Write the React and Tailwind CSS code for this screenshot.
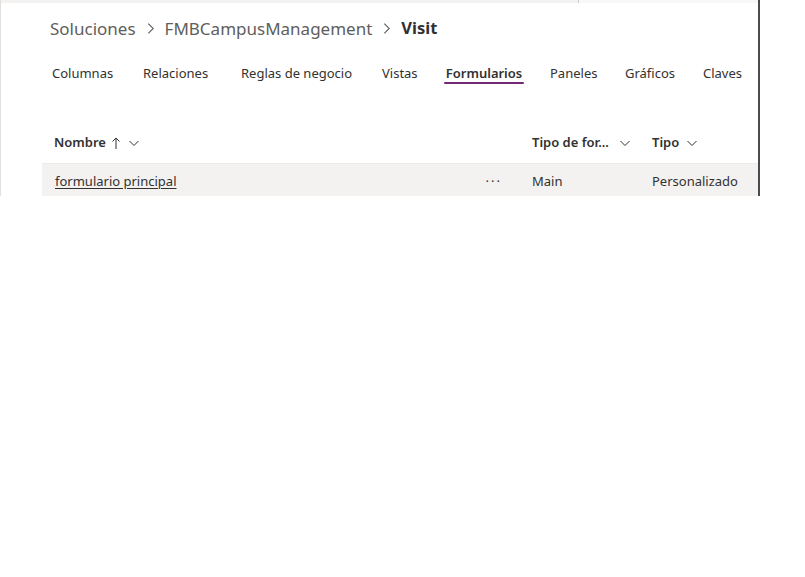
import React from 'react';

const font = { fontFamily: '"Segoe UI", "Noto Sans", "Open Sans", sans-serif' };

const Chevron = ({ className = '' }) => (
  <svg viewBox="0 0 12 12" className={className} fill="none" stroke="currentColor" strokeWidth="1">
    <path d="M1.5 4 L6 8.5 L10.5 4" />
  </svg>
);

const UpArrow = () => (
  <svg viewBox="0 0 10 14" className="w-[10px] h-[14px]" fill="none" stroke="currentColor" strokeWidth="1">
    <path d="M5 13 V2 M1.5 5.5 L5 2 L8.5 5.5" />
  </svg>
);

const tabs = [
  ['Columnas', 'w-[91px]'],
  ['Relaciones', 'w-[98px]'],
  ['Reglas de negocio', 'w-[141px]'],
  ['Vistas', 'w-[62px]'],
  ['Formularios', 'w-[106px]'],
  ['Paneles', 'w-[75px]'],
  ['Gráficos', 'w-[78px]'],
  ['Claves', 'w-[50px]'],
];

export default function App() {
  return (
    <div className="w-[805px] h-[577px] bg-white text-[#323130]" style={font}>
      <div className="w-[760px] h-[196px] flex flex-col border-l border-[#e1dfdd] border-r-2 border-r-[#4b4b4b]">
        <div className="h-[3px] flex">
          <div className="w-[577px] bg-[#f3f2f1]" />
          <div className="w-px bg-[#d2d0ce]" />
          <div className="flex-1 bg-[#f8f8f8]" />
        </div>

        <div className="flex items-center pl-[49px] pt-[13px] h-[38px] text-[17px] leading-none">
          <span className="text-[#605e5c]">Soluciones</span>
          <Chevron className="w-[13px] h-[13px] mx-[8px] -rotate-90 text-[#605e5c]" />
          <span className="text-[#605e5c]">FMBCampusManagement</span>
          <Chevron className="w-[13px] h-[13px] mx-[8px] -rotate-90 text-[#605e5c]" />
          <span className="font-bold text-[#323130] text-[16.5px]">Visit</span>
        </div>

        <div className="flex pl-[51px] mt-[22px] text-[13px] h-[28px] whitespace-nowrap">
          {tabs.map(([t, w]) => {
            const active = t === 'Formularios';
            return (
              <div key={t} className={`${w} flex flex-col items-start`}>
                <div className="flex flex-col items-center">
                  <span className={active ? 'font-semibold leading-[20px]' : 'leading-[20px]'}>{t}</span>
                  {active && <div className="-mt-[1px] h-[2px] w-[80px] bg-[#742774] rounded-sm" />}
                </div>
              </div>
            );
          })}
        </div>

        <div className="ml-[41px] mt-[42px] flex flex-col">
          <div className="flex items-center h-[31px] pb-[10px] text-[13px] font-semibold">
            <div className="w-[478px] pl-[12px] flex items-center">
              <span>Nombre</span>
              <span className="ml-[5px] font-normal"><UpArrow /></span>
              <Chevron className="ml-[7px] w-[12px] h-[12px]" />
            </div>
            <div className="w-[132px] pl-[12px] flex items-center">
              <span>Tipo de for...</span>
              <Chevron className="ml-[10px] w-[12px] h-[12px]" />
            </div>
            <div className="flex-1 flex items-center">
              <span>Tipo</span>
              <Chevron className="ml-[7px] w-[12px] h-[12px]" />
            </div>
          </div>
          <div className="flex items-center h-[33px] pt-[3px] bg-[#f3f2f1] border-t border-[#edebe9] text-[13px]">
            <div className="w-[478px] pl-[13px] flex items-center justify-between pr-[18px]">
              <span className="underline underline-offset-2">formulario principal</span>
              <span className="tracking-[2px]">···</span>
            </div>
            <div className="w-[132px] pl-[12px]">Main</div>
            <div className="flex-1">Personalizado</div>
          </div>
        </div>
      </div>
    </div>
  );
}
